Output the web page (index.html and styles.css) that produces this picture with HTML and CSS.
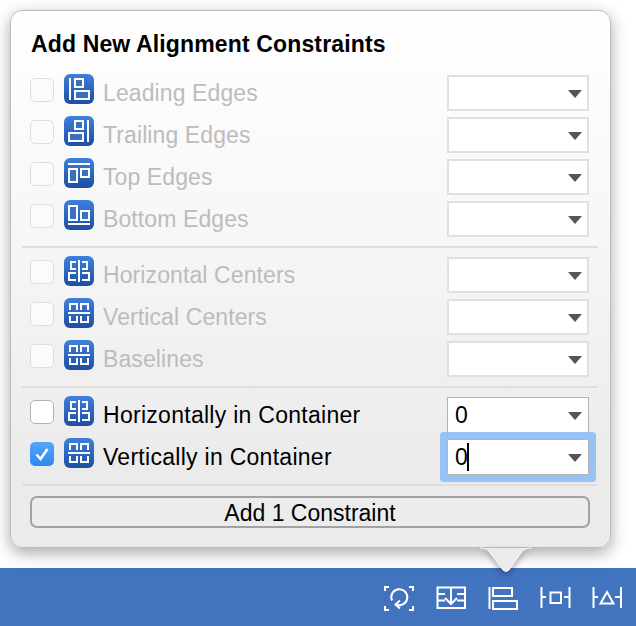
FILE: index.html
```html
<!DOCTYPE html>
<html lang="en">
<head>
	<meta charset="UTF-8">
	<meta name="viewport" content="width=device-width, initial-scale=1.0">
	<title>Add New Alignment Constraints</title>
	<link rel="stylesheet" href="styles.css">
</head>
<body>
	<svg class="defs" width="0" height="0">
		<defs>
			<linearGradient id="tile" x1="0" y1="0" x2="0" y2="1">
				<stop offset="0" stop-color="#3f80dc"/>
				<stop offset="1" stop-color="#1c4ea4"/>
			</linearGradient>
			<symbol id="i-leading" viewBox="0 0 30 30">
				<rect width="30" height="30" rx="6" fill="url(#tile)"/>
				<g fill="#3a6fc2" stroke="#fff" stroke-width="2"><path d="M6 4V26"/><rect x="11" y="5" width="8" height="8"/><rect x="11" y="17" width="14" height="8"/></g>
			</symbol>
			<symbol id="i-trailing" viewBox="0 0 30 30">
				<rect width="30" height="30" rx="6" fill="url(#tile)"/>
				<g fill="#3a6fc2" stroke="#fff" stroke-width="2"><path d="M24 4V26"/><rect x="11" y="5" width="8" height="8"/><rect x="5" y="17" width="14" height="8"/></g>
			</symbol>
			<symbol id="i-top" viewBox="0 0 30 30">
				<rect width="30" height="30" rx="6" fill="url(#tile)"/>
				<g fill="#3a6fc2" stroke="#fff" stroke-width="2"><path d="M4 6H26"/><rect x="5" y="11" width="8" height="13"/><rect x="17" y="11" width="8" height="8"/></g>
			</symbol>
			<symbol id="i-bottom" viewBox="0 0 30 30">
				<rect width="30" height="30" rx="6" fill="url(#tile)"/>
				<g fill="#3a6fc2" stroke="#fff" stroke-width="2"><path d="M4 24H26"/><rect x="5" y="6" width="8" height="14"/><rect x="17" y="11" width="8" height="9"/></g>
			</symbol>
			<symbol id="i-hcenter" viewBox="0 0 30 30">
				<rect width="30" height="30" rx="6" fill="url(#tile)"/>
				<g fill="none" stroke="#fff" stroke-width="2"><path d="M15 4V26"/><path d="M12 6H7V13H12"/><path d="M18 6H23V13H18"/><path d="M12 17H5V24H12"/><path d="M18 17H25V24H18"/></g>
			</symbol>
			<symbol id="i-vcenter" viewBox="0 0 30 30">
				<rect width="30" height="30" rx="6" fill="url(#tile)"/>
				<g fill="none" stroke="#fff" stroke-width="2"><path d="M4 15H26"/><path d="M6 12V6H13V12"/><path d="M17 12V6H24V12"/><path d="M6 18V24H13V18"/><path d="M17 18V24H24V18"/></g>
			</symbol>
		</defs>
	</svg>

	<div class="page">
		<div class="popover">
			<h2 class="title">Add New Alignment Constraints</h2>

			<div class="section">
				<div class="row off">
					<span class="check"></span>
					<svg class="tile"><use href="#i-leading"/></svg>
					<span class="label">Leading Edges</span>
					<div class="field"><span class="value"></span><i class="caret"></i></div>
				</div>
				<div class="row off">
					<span class="check"></span>
					<svg class="tile"><use href="#i-trailing"/></svg>
					<span class="label">Trailing Edges</span>
					<div class="field"><span class="value"></span><i class="caret"></i></div>
				</div>
				<div class="row off">
					<span class="check"></span>
					<svg class="tile"><use href="#i-top"/></svg>
					<span class="label">Top Edges</span>
					<div class="field"><span class="value"></span><i class="caret"></i></div>
				</div>
				<div class="row off">
					<span class="check"></span>
					<svg class="tile"><use href="#i-bottom"/></svg>
					<span class="label">Bottom Edges</span>
					<div class="field"><span class="value"></span><i class="caret"></i></div>
				</div>
			</div>

			<div class="sep"></div>

			<div class="section">
				<div class="row off">
					<span class="check"></span>
					<svg class="tile"><use href="#i-hcenter"/></svg>
					<span class="label">Horizontal Centers</span>
					<div class="field"><span class="value"></span><i class="caret"></i></div>
				</div>
				<div class="row off">
					<span class="check"></span>
					<svg class="tile"><use href="#i-vcenter"/></svg>
					<span class="label">Vertical Centers</span>
					<div class="field"><span class="value"></span><i class="caret"></i></div>
				</div>
				<div class="row off">
					<span class="check"></span>
					<svg class="tile"><use href="#i-vcenter"/></svg>
					<span class="label">Baselines</span>
					<div class="field"><span class="value"></span><i class="caret"></i></div>
				</div>
			</div>

			<div class="sep"></div>

			<div class="section">
				<div class="row">
					<span class="check"></span>
					<svg class="tile"><use href="#i-hcenter"/></svg>
					<span class="label">Horizontally in Container</span>
					<div class="field"><span class="value">0</span><i class="caret"></i></div>
				</div>
				<div class="row">
					<span class="check checked">
						<svg width="24" height="24" viewBox="0 0 24 24"><path d="M6.5 12.5L10.5 17L17.5 7" fill="none" stroke="#fff" stroke-width="2.6"/></svg>
					</span>
					<svg class="tile"><use href="#i-vcenter"/></svg>
					<span class="label">Vertically in Container</span>
					<div class="field focused"><span class="value">0</span><span class="cursor"></span><i class="caret"></i></div>
				</div>
			</div>

			<div class="sep last"></div>

			<div class="add">Add 1 Constraint</div>

			<!-- arrow pointing down at the toolbar icon -->
			<svg class="arrow" width="52" height="28" viewBox="0 0 52 28">
				<path d="M0 2C6 2 8 4 10 7L23 24Q26 27 29 24L41 7C43 4 46 2 52 2" fill="#ebebeb" stroke="#f6f6f6"/>
			</svg>
		</div>

		<div class="toolbar">
			<svg class="tool" viewBox="0 0 32 28">
				<path d="M1 7V3H5M25 3H29V7M1 22V26H5M25 26H29V22"/>
				<path d="M8 16.5A8 8 0 1 1 12 20.5M16 16.5L11.5 20.5L16 24.5"/>
			</svg>
			<svg class="tool" viewBox="0 0 32 28">
				<rect x="1.5" y="3.5" width="27.5" height="20.5"/>
				<path d="M1.5 10H9M1.5 16.5H9M21 10H29M21 16.5H29M15 3.5V20M9 14L15 20L21 14"/>
			</svg>
			<svg class="tool" viewBox="0 0 32 28">
				<path d="M1.5 3V25"/>
				<rect x="5" y="4" width="19" height="8"/>
				<rect x="5" y="17" width="24" height="8"/>
			</svg>
			<svg class="tool" viewBox="0 0 32 28">
				<path d="M1.5 3V24M29.5 3V24M1.5 13H6M24 13H29.5"/>
				<rect x="10.5" y="8.5" width="10.5" height="10.5"/>
			</svg>
			<svg class="tool" viewBox="0 0 32 28">
				<path d="M1.5 3V24M29 3V24M1.5 13H6M23 13H29"/>
				<path d="M15 8L8.5 19.5H21.5Z"/>
			</svg>
		</div>
	</div>
</body>
</html>
```

FILE: styles.css
```css
* {
	margin: 0;
	padding: 0;
	box-sizing: border-box;
}

body {
	width: 636px;
	height: 626px;
	overflow: hidden;
	background-color: #ffffff;
	font-family: "Liberation Sans", Arial, sans-serif;
	font-size: 23px;
	color: #000000;
}

.defs {
	position: absolute;
}

.page {
	display: flex;
	flex-direction: column;
	height: 626px;
	padding-top: 10px;
}

/* Popover */
.popover {
	position: relative;
	z-index: 1;
	width: 601px;
	height: 538px;
	margin-left: 10px;
	padding: 20px 20px 0 20px;
	border: 1px solid #bcbcbc;
	border-radius: 12px;
	background: linear-gradient(#ffffff, #f7f7f7 40%, #ebebeb 85%);
	box-shadow: 0 5px 16px rgba(0, 0, 0, .34);
}

.title {
	height: 26px;
	margin-bottom: 18px;
	font-size: 23px;
	line-height: 27px;
	font-weight: bold;
	letter-spacing: .14px;
}

.section {
	display: flex;
	flex-direction: column;
	gap: 6px;
}

.row {
	display: flex;
	height: 36px;
	align-items: flex-start;
}

.check {
	flex: none;
	width: 24px;
	height: 24px;
	margin-top: 3px;
	margin-left: -1px;
	border: 1px solid #b4b4b4;
	border-radius: 5px;
	background-color: #ffffff;
}

.off .check {
	border-color: #dddddd;
	background-color: #fbfbfb;
}

.check.checked {
	border: 0;
	background: linear-gradient(#55a6fa, #2e88f2);
}

.check svg {
	display: block;
}

.tile {
	flex: none;
	width: 30px;
	height: 30px;
	margin-top: -1px;
	margin-left: 10px;
}

.label {
	flex: 1;
	margin-left: 9px;
	line-height: 36px;
	letter-spacing: .28px;
}

.off .label {
	color: #bcbcbc;
	letter-spacing: .1px;
}

/* Combo field */
.field {
	display: flex;
	flex: none;
	align-items: center;
	position: relative;
	width: 142px;
	height: 36px;
	margin-right: 1px;
	padding-left: 7px;
	border: 1px solid #b4b4b4;
	background-color: #ffffff;
}

.off .field {
	border: 2px solid #e0e0e0;
	padding-left: 6px;
}

.field.focused {
	border-radius: 1px;
	box-shadow: 0 0 0 7px #96c3f4;
}

.value {
	line-height: 36px;
}

.cursor {
	width: 2px;
	height: 28px;
	margin-left: -1px;
	background-color: #000000;
}

.caret {
	position: absolute;
	right: 6px;
	top: 14px;
	width: 0;
	height: 0;
	border-left: 7px solid transparent;
	border-right: 7px solid transparent;
	border-top: 8px solid #555555;
}

.off .caret {
	right: 5px;
	top: 13px;
}

.sep {
	height: 2px;
	margin: 9px -8px 9px -9px;
	background-color: #dedede;
}

.sep.last {
	margin-bottom: 10px;
}

.add {
	height: 32px;
	margin-left: -1px;
	border: 2px solid #a2a2a2;
	border-radius: 7px;
	background-color: #ececec;
	text-align: center;
	line-height: 30px;
}

.arrow {
	position: absolute;
	left: 469px;
	top: 100%;
	margin-top: -1px;
	overflow: visible;
	filter: drop-shadow(0 3px 3px rgba(0, 0, 0, .3));
}

/* Bottom toolbar */
.toolbar {
	display: flex;
	justify-content: flex-end;
	gap: 20px;
	height: 58px;
	margin-top: 20px;
	padding: 16px 12px 0 0;
	background-color: #4273bf;
}

.tool {
	width: 32px;
	height: 28px;
	fill: none;
	stroke: #ffffff;
	stroke-width: 2;
}
```
